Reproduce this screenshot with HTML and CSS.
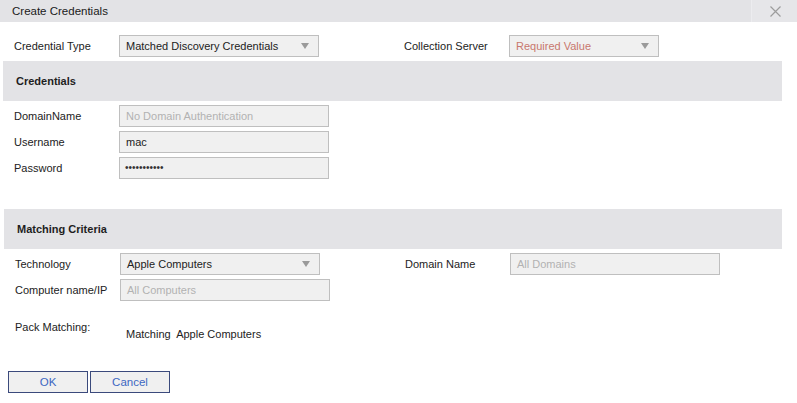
FILE: index.html
```html
<!DOCTYPE html>
<html>
<head>
<meta charset="utf-8">
<link rel="stylesheet" href="styles.css">
</head>
<body>
<div class="dialog">
  <div class="titlebar">
    <div class="title">Create Credentials</div>
    <div class="close">
      <svg width="11" height="11" viewBox="0 0 11 11"><path d="M0.5 0.5 L10.5 10.5 M10.5 0.5 L0.5 10.5" stroke="#9c9c9c" stroke-width="1.2" fill="none"/></svg>
    </div>
  </div>

  <div class="row top-row">
    <div class="label">Credential Type</div>
    <div class="field select w200"><span>Matched Discovery Credentials</span><i class="arrow"></i></div>
    <div class="spacer"></div>
    <div class="label">Collection Server</div>
    <div class="field select w150 required"><span>Required Value</span><i class="arrow"></i></div>
  </div>

  <div class="section-head">Credentials</div>

  <div class="stack">
    <div class="row">
      <div class="label">DomainName</div>
      <div class="field w210 placeholder">No Domain Authentication</div>
    </div>
    <div class="row">
      <div class="label">Username</div>
      <div class="field w210">mac</div>
    </div>
    <div class="row">
      <div class="label">Password</div>
      <div class="field w210 dots">•••••••••••</div>
    </div>
  </div>

  <div class="section-head second">Matching Criteria</div>

  <div class="stack shifted">
    <div class="row">
      <div class="label">Technology</div>
      <div class="field select w200"><span>Apple Computers</span><i class="arrow"></i></div>
      <div class="spacer"></div>
      <div class="label">Domain Name</div>
      <div class="field w210 placeholder">All Domains</div>
    </div>
    <div class="row">
      <div class="label">Computer name/IP</div>
      <div class="field w210 placeholder">All Computers</div>
    </div>
  </div>

  <div class="pack shifted">
    <div class="label pack-label">Pack Matching:</div>
    <div class="pack-value">Matching&nbsp; Apple Computers</div>
  </div>

  <div class="buttons">
    <button class="btn">OK</button>
    <button class="btn">Cancel</button>
  </div>
</div>
</body>
</html>
```

FILE: styles.css
```css
* { box-sizing: border-box; }
html, body {
  margin: 0;
  padding: 0;
  background: #ffffff;
}
body {
  font-family: "Liberation Sans", Arial, sans-serif;
  font-size: 11px;
  color: #222222;
  width: 797px;
  height: 403px;
  overflow: hidden;
}
.dialog {
  width: 797px;
}
.titlebar {
  height: 22px;
  background: #e3e3e6;
  display: flex;
  justify-content: space-between;
  align-items: stretch;
}
.title {
  padding-left: 12px;
  line-height: 22px;
  font-size: 11.5px;
  color: #1a1a1a;
}
.close {
  width: 46px;
  background: #e6e6e9;
  border-left: 1px solid #ececef;
  display: flex;
  align-items: center;
  justify-content: center;
  padding-left: 2px;
}
.row {
  display: flex;
  align-items: center;
  height: 22px;
  padding-left: 14px;
}
.top-row {
  margin-top: 13px;
}
.label {
  width: 105px;
  flex: none;
  color: #222222;
}
.spacer {
  width: 85px;
  flex: none;
}
.field {
  height: 22px;
  border: 1px solid #bfbfbf;
  background: #f0f0f0;
  padding: 0 6px;
  line-height: 20px;
  flex: none;
  color: #222222;
  white-space: nowrap;
  overflow: hidden;
}
.w200 { width: 200px; }
.w150 { width: 150px; }
.w210 { width: 210px; }
.select {
  display: flex;
  justify-content: space-between;
  align-items: center;
  padding-right: 9px;
}
.arrow {
  width: 0;
  height: 0;
  border-left: 4.5px solid transparent;
  border-right: 4.5px solid transparent;
  border-top: 6px solid #9a9a9a;
  display: block;
}
.required span {
  color: #c8776d;
}
.placeholder {
  color: #b2b2b2;
}
.dots {
  font-size: 10px;
  padding-left: 5px;
  color: #333;
}
.section-head {
  margin: 4px 15px 0 3px;
  height: 40px;
  background: #e3e3e6;
  font-weight: bold;
  padding-left: 13px;
  line-height: 40px;
  color: #1e1e1e;
}
.section-head.second {
  margin-top: 30px;
  margin-left: 4px;
}
.stack {
  margin-top: 4px;
  display: flex;
  flex-direction: column;
  gap: 4px;
}
.shifted .row {
  padding-left: 15px;
}
.pack {
  display: flex;
  padding-left: 15px;
  margin-top: 20px;
  height: 24px;
}
.pack-label {
  width: 111px;
}
.pack-value {
  padding-top: 7px;
}
.buttons {
  display: flex;
  gap: 2px;
  padding-left: 8px;
  margin-top: 26px;
}
.btn {
  width: 80px;
  height: 22px;
  border: 1px solid #3b4a7c;
  background: #f0f0f0;
  color: #3d67c2;
  font-family: "Liberation Sans", Arial, sans-serif;
  font-size: 11.5px;
  padding: 0;
  border-radius: 0;
}
```
